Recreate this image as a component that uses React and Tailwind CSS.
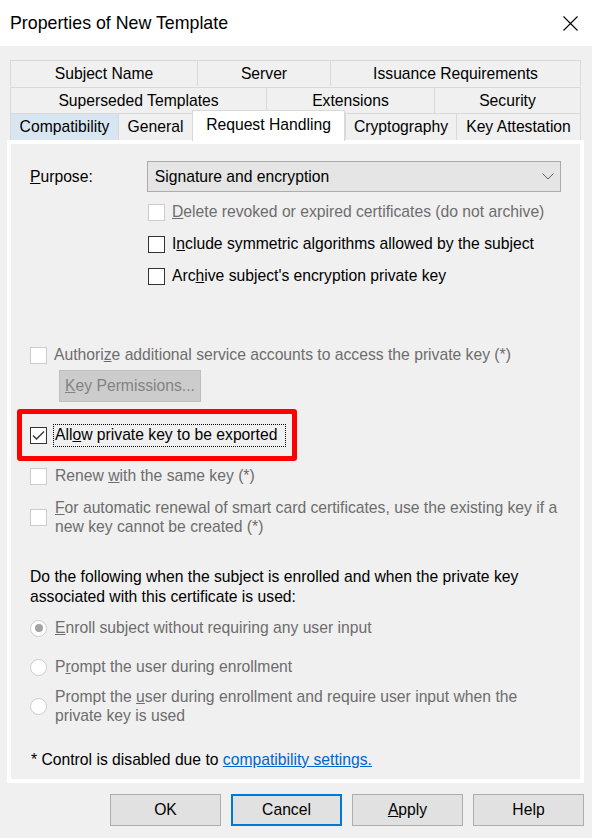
import React from "react";

const row1 = [
  { label: "Subject Name", w: "w-[187px]" },
  { label: "Server", w: "w-[133px]" },
  { label: "Issuance Requirements", w: "w-[251px]" },
];
const row2 = [
  { label: "Superseded Templates", w: "w-[256px]" },
  { label: "Extensions", w: "w-[168px]" },
  { label: "Security", w: "w-[147px]" },
];

// small square checkbox, win10 look
const Box = ({ checked, disabled }) => (
  <span
    className={`w-[17px] h-[17px] shrink-0 border bg-white flex items-center justify-center ${
      disabled ? "border-[#cccccc]" : "border-[#333333]"
    }`}
  >
    {checked && (
      <svg width="13" height="11" viewBox="0 0 13 11">
        <path d="M1 5.5 L4.5 9 L12 1.5" fill="none" stroke="#333333" strokeWidth="1.3" />
      </svg>
    )}
  </span>
);

const Radio = ({ selected }) => (
  <span className="w-[17px] h-[17px] shrink-0 rounded-full border border-[#cccccc] bg-white flex items-center justify-center">
    {selected && <span className="w-[8px] h-[8px] rounded-full bg-[#a3a3a3]" />}
  </span>
);

const Tab = ({ label, w, last }) => (
  <div
    className={`${w} h-full flex items-center justify-center border-t border-l border-[#d9d9d9] bg-[#f0f0f0] ${
      last ? "border-r" : ""
    }`}
  >
    {label}
  </div>
);

const Btn = ({ children, primary }) => (
  <div
    className={`w-[111px] h-[32px] flex items-center justify-center bg-[#e1e1e1] ${
      primary ? "border-2 border-[#0078d7]" : "border border-[#adadad]"
    }`}
  >
    {children}
  </div>
);

export default function App() {
  return (
    <div className="w-[592px] h-[838px] bg-[#f0f0f0] text-black text-[15.7px] leading-[20px] font-['Liberation_Sans',Arial,sans-serif] overflow-hidden">
      {/* title bar */}
      <div className="h-[46px] bg-white flex items-center justify-between pl-[10px] pr-[14px]">
        <span className="text-[17.8px]">Properties of New Template</span>
        <svg width="15" height="15" viewBox="0 0 15 15">
          <path d="M0.5 0.5 L14.5 14.5 M14.5 0.5 L0.5 14.5" stroke="#000" strokeWidth="1.1" />
        </svg>
      </div>

      {/* tab rows */}
      <div className="mt-[14px] ml-[10px] w-[571px]">
        <div className="flex h-[26px]">
          {row1.map((t, i) => (
            <Tab key={t.label} {...t} last={i === row1.length - 1} />
          ))}
        </div>
        <div className="flex h-[27px] pt-[1px]">
          {row2.map((t, i) => (
            <Tab key={t.label} {...t} last={i === row2.length - 1} />
          ))}
        </div>
        <div className="flex h-[27px]">
          <div className="w-[108px] h-full flex items-center justify-center border-t border-l border-[#d9d9d9] bg-[#d8e6f2]">
            Compatibility
          </div>
          <Tab label="General" w="w-[74px]" />
          <div className="relative -top-[3px] z-10 w-[153px] h-[31px] flex items-start justify-center pt-[4px] bg-white border-t border-l border-r border-[#d9d9d9]">
            Request Handling
          </div>
          <Tab label="Cryptography" w="w-[111px]" />
          <Tab label="Key Attestation" w="w-[125px]" last />
        </div>
      </div>

      {/* tab page */}
      <div className="ml-[7px] w-[577px] h-[643px] border-4 border-white px-[19px]">
        <div className="mt-[17px] flex items-center">
          <span className="w-[117px]">
            <u>P</u>urpose:
          </span>
          <div className="w-[415px] h-[31px] bg-[#e5e5e5] border border-[#acacac] flex items-center justify-between pl-[7px] pr-[6px]">
            <span>Signature and encryption</span>
            <svg width="12" height="7" viewBox="0 0 12 7">
              <path d="M0.5 0.5 L6 6 L11.5 0.5" fill="none" stroke="#606060" strokeWidth="1" />
            </svg>
          </div>
        </div>

        <div className="pl-[118px]">
          <div className="h-[32px] mt-[4px] flex items-center gap-[7px] text-[#6d6d6d]">
            <Box disabled />
            <span>
              <u>D</u>elete revoked or expired certificates (do not archive)
            </span>
          </div>
          <div className="h-[32px] flex items-center gap-[7px]">
            <Box />
            <span>
              I<u>n</u>clude symmetric algorithms allowed by the subject
            </span>
          </div>
          <div className="h-[32px] flex items-center gap-[7px]">
            <Box />
            <span>
              Arc<u>h</u>ive subject's encryption private key
            </span>
          </div>
        </div>

        <div className="mt-[53px] h-[20px] flex items-center gap-[7px] text-[#6d6d6d]">
          <Box disabled />
          <span>
            Authori<u>z</u>e additional service accounts to access the private key (*)
          </span>
        </div>
        <div className="ml-[29px] mt-[5px] w-[142px] h-[32px] bg-[#cccccc] border border-[#bfbfbf] text-[#838383] flex items-center justify-center">
          <span>
            <u>K</u>ey Permissions...
          </span>
        </div>

        {/* highlighted option */}
        <div className="mt-[7px] -ml-[13px] w-[280px] h-[52px] border-[5px] border-[#ff0000] rounded-[3px] flex items-center pl-[8px] gap-[6px]">
          <Box checked />
          <span className="w-[233px] h-[23px] border border-dotted border-black flex items-center pl-[1px]">
            All<u>o</u>w private key to be exported
          </span>
        </div>

        <div className="mt-[5px] h-[20px] flex items-center gap-[8px] text-[#6d6d6d]">
          <Box disabled />
          <span>
            Renew <u>w</u>ith the same key (*)
          </span>
        </div>
        <div className="mt-[12px] flex items-center gap-[8px] text-[#6d6d6d] leading-[19px]">
          <Box disabled />
          <span>
            <u>F</u>or automatic renewal of smart card certificates, use the existing key if a
            <br />
            new key cannot be created (*)
          </span>
        </div>

        <div className="mt-[31px] leading-[20px]">
          Do the following when the subject is enrolled and when the private key
          <br />
          associated with this certificate is used:
        </div>

        <div className="mt-[11px] h-[20px] flex items-center gap-[8px] text-[#6d6d6d]">
          <Radio selected />
          <span>
            <u>E</u>nroll subject without requiring any user input
          </span>
        </div>
        <div className="mt-[19px] h-[20px] flex items-center gap-[8px] text-[#6d6d6d]">
          <Radio />
          <span>
            P<u>r</u>ompt the user during enrollment
          </span>
        </div>
        <div className="mt-[10px] flex items-center gap-[8px] text-[#6d6d6d] leading-[19px]">
          <Radio />
          <span>
            Prompt the <u>u</u>ser during enrollment and require user input when the
            <br />
            private key is used
          </span>
        </div>

        <div className="mt-[25px] h-[20px] flex items-center pl-[1px]">
          <span>
            * Control is disabled due to{" "}
            <span className="text-[#0066cc] underline">compatibility settings.</span>
          </span>
        </div>
      </div>

      {/* dialog buttons */}
      <div className="mt-[11px] pr-[8px] flex justify-end gap-[10px]">
        <Btn>OK</Btn>
        <Btn primary>Cancel</Btn>
        <Btn>
          <span>
            <u>A</u>pply
          </span>
        </Btn>
        <Btn>Help</Btn>
      </div>
    </div>
  );
}
